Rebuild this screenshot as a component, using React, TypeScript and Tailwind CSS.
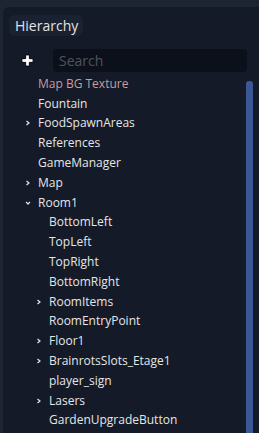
import React from "react";

type Item = { label: string; level: number; arrow?: "right" | "down"; accent?: boolean };

const items: Item[] = [
  { label: "Map BG Texture", level: 0, accent: true },
  { label: "Fountain", level: 0 },
  { label: "FoodSpawnAreas", level: 0, arrow: "right" },
  { label: "References", level: 0 },
  { label: "GameManager", level: 0 },
  { label: "Map", level: 0, arrow: "right" },
  { label: "Room1", level: 0, arrow: "down" },
  { label: "BottomLeft", level: 1 },
  { label: "TopLeft", level: 1 },
  { label: "TopRight", level: 1 },
  { label: "BottomRight", level: 1 },
  { label: "RoomItems", level: 1, arrow: "right" },
  { label: "RoomEntryPoint", level: 1 },
  { label: "Floor1", level: 1, arrow: "right" },
  { label: "BrainrotsSlots_Etage1", level: 1, arrow: "right" },
  { label: "player_sign", level: 1 },
  { label: "Lasers", level: 1, arrow: "right" },
  { label: "GardenUpgradeButton", level: 1 },
];

function Arrow({ dir }: { dir: "right" | "down" }) {
  return (
    <svg width="6" height="6" viewBox="0 0 6 6" className="shrink-0">
      {dir === "right" ? (
        <path d="M1.5 1 L4 3 L1.5 5" stroke="#e6e6e6" strokeWidth="1.2" fill="none" />
      ) : (
        <path d="M1 1.8 L3 4 L5 1.8" stroke="#e6e6e6" strokeWidth="1.2" fill="none" />
      )}
    </svg>
  );
}

export default function App() {
  return (
    <div
      className="w-[259px] h-[433px] bg-[#1d2432] pt-[7px] pl-[3px] overflow-hidden"
      style={{ fontFamily: '"Open Sans", "Noto Sans", sans-serif' }}
    >
      <div className="h-full bg-[#141a28] rounded-tl-[6px] flex flex-col relative">
        <div className="pt-[6px] pl-[6px]">
          <div className="inline-flex items-center h-[21px] pl-[6px] pr-[5px] rounded-[6px] bg-[#1a2131] text-[14px] text-[#e2e2e2]">
            Hierarchy
          </div>
        </div>
        <div className="flex items-center mt-[12px] h-[23px]">
          <div className="w-[50px] flex justify-center pr-[1px]">
            <svg width="13" height="13" viewBox="0 0 14 14">
              <path
                d="M5 1 H9 V5 H13 V9 H9 V13 H5 V9 H1 V5 H5 Z"
                fill="#ffffff"
                stroke="#000000"
                strokeWidth="1"
              />
            </svg>
          </div>
          <div className="w-[194px] h-[23px] rounded-[4px] bg-[#0c101a] flex items-center pl-[6px] text-[14px] text-[#4e5461]">
            Search
          </div>
        </div>
        <div className="mt-[2px] flex flex-col">
          {items.map((it, i) => (
            <div
              key={i}
              className={`h-[19.8px] flex items-center text-[12px] ${
                it.accent ? "text-[#c79d9d]" : "text-[#e6e6e6]"
              } ${it.level === 0 ? "pl-[22px]" : "pl-[33px]"}`}
            >
              <div className="w-[13px] flex items-center">
                {it.arrow ? <Arrow dir={it.arrow} /> : null}
              </div>
              <span className="leading-none">{it.label}</span>
            </div>
          ))}
        </div>
        <div className="absolute left-[243px] top-[74px] w-[7px] bottom-0 bg-[#3b5894] rounded-t-[3px]" />
      </div>
    </div>
  );
}
